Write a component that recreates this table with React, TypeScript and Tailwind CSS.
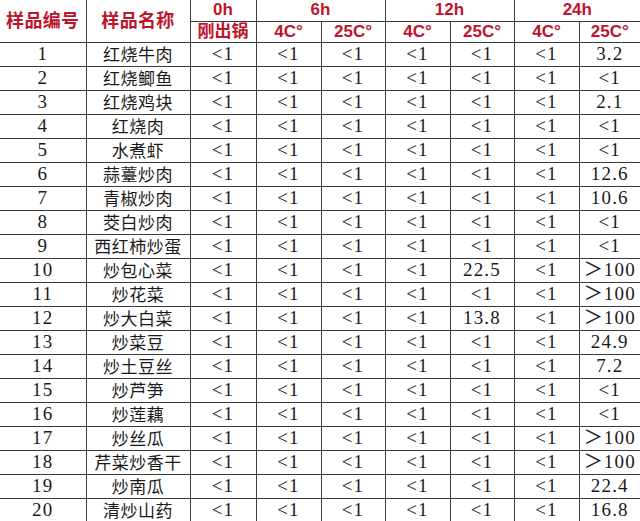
import React from 'react';

const rows: [string, string, string, string, string, string, string, string, string][] = [
  ['1', '红烧牛肉', '<1', '<1', '<1', '<1', '<1', '<1', '3.2'],
  ['2', '红烧鲫鱼', '<1', '<1', '<1', '<1', '<1', '<1', '<1'],
  ['3', '红烧鸡块', '<1', '<1', '<1', '<1', '<1', '<1', '2.1'],
  ['4', '红烧肉', '<1', '<1', '<1', '<1', '<1', '<1', '<1'],
  ['5', '水煮虾', '<1', '<1', '<1', '<1', '<1', '<1', '<1'],
  ['6', '蒜薹炒肉', '<1', '<1', '<1', '<1', '<1', '<1', '12.6'],
  ['7', '青椒炒肉', '<1', '<1', '<1', '<1', '<1', '<1', '10.6'],
  ['8', '茭白炒肉', '<1', '<1', '<1', '<1', '<1', '<1', '<1'],
  ['9', '西红柿炒蛋', '<1', '<1', '<1', '<1', '<1', '<1', '<1'],
  ['10', '炒包心菜', '<1', '<1', '<1', '<1', '22.5', '<1', '＞100'],
  ['11', '炒花菜', '<1', '<1', '<1', '<1', '<1', '<1', '＞100'],
  ['12', '炒大白菜', '<1', '<1', '<1', '<1', '13.8', '<1', '＞100'],
  ['13', '炒菜豆', '<1', '<1', '<1', '<1', '<1', '<1', '24.9'],
  ['14', '炒土豆丝', '<1', '<1', '<1', '<1', '<1', '<1', '7.2'],
  ['15', '炒芦笋', '<1', '<1', '<1', '<1', '<1', '<1', '<1'],
  ['16', '炒莲藕', '<1', '<1', '<1', '<1', '<1', '<1', '<1'],
  ['17', '炒丝瓜', '<1', '<1', '<1', '<1', '<1', '<1', '＞100'],
  ['18', '芹菜炒香干', '<1', '<1', '<1', '<1', '<1', '<1', '＞100'],
  ['19', '炒南瓜', '<1', '<1', '<1', '<1', '<1', '<1', '22.4'],
  ['20', '清炒山药', '<1', '<1', '<1', '<1', '<1', '<1', '16.8'],
];

const widths = [86, 104, 66, 65, 64, 65, 64, 65, 61];

const head =
  'border-r border-b border-[#3a3a3a] p-0 text-center align-middle font-bold text-[#c0142c] text-[17px] leading-[20px] whitespace-nowrap';
const cell =
  'border-r border-b border-[#3a3a3a] p-0 text-center align-middle leading-[22px] text-[#1a1a1a] whitespace-nowrap';

export default function App() {
  return (
    <div className="w-[640px] h-[521px] overflow-hidden bg-white">
      <table
        className="table-fixed border-collapse w-[640px]"
        style={{ fontFamily: '"Liberation Sans", "Noto Sans CJK SC", sans-serif' }}
      >
        <colgroup>
          {widths.map((w, i) => (
            <col key={i} style={{ width: w }} />
          ))}
        </colgroup>
        <thead>
          <tr className="h-[21px]">
            <th rowSpan={2} className={`${head} text-[18px] tracking-[0.02em]`}>样品编号</th>
            <th rowSpan={2} className={`${head} text-[18px] tracking-[0.02em]`}>样品名称</th>
            <th className={head}>0h</th>
            <th colSpan={2} className={head}>6h</th>
            <th colSpan={2} className={head}>12h</th>
            <th colSpan={2} className={`${head} border-r-0`}>24h</th>
          </tr>
          <tr className="h-[21px]">
            <th className={head}>刚出锅</th>
            <th className={head}>4C°</th>
            <th className={head}>25C°</th>
            <th className={head}>4C°</th>
            <th className={head}>25C°</th>
            <th className={head}>4C°</th>
            <th className={`${head} border-r-0`}>25C°</th>
          </tr>
        </thead>
        <tbody>
          {rows.map((r) => (
            <tr key={r[0]} className="h-[24px]">
              {r.map((v, i) => (
                <td
                  key={i}
                  className={`${cell} ${i === 8 ? 'border-r-0' : ''} ${
                    i === 1
                      ? 'text-[17px] tracking-[0.03em]'
                      : 'text-[19px] tracking-[0.06em]'
                  }`}
                  style={{
                    fontFamily:
                      i === 1
                        ? '"Noto Sans CJK SC", sans-serif'
                        : '"Liberation Serif", "Noto Sans CJK SC", serif',
                  }}
                >
                  {v}
                </td>
              ))}
            </tr>
          ))}
        </tbody>
      </table>
    </div>
  );
}
